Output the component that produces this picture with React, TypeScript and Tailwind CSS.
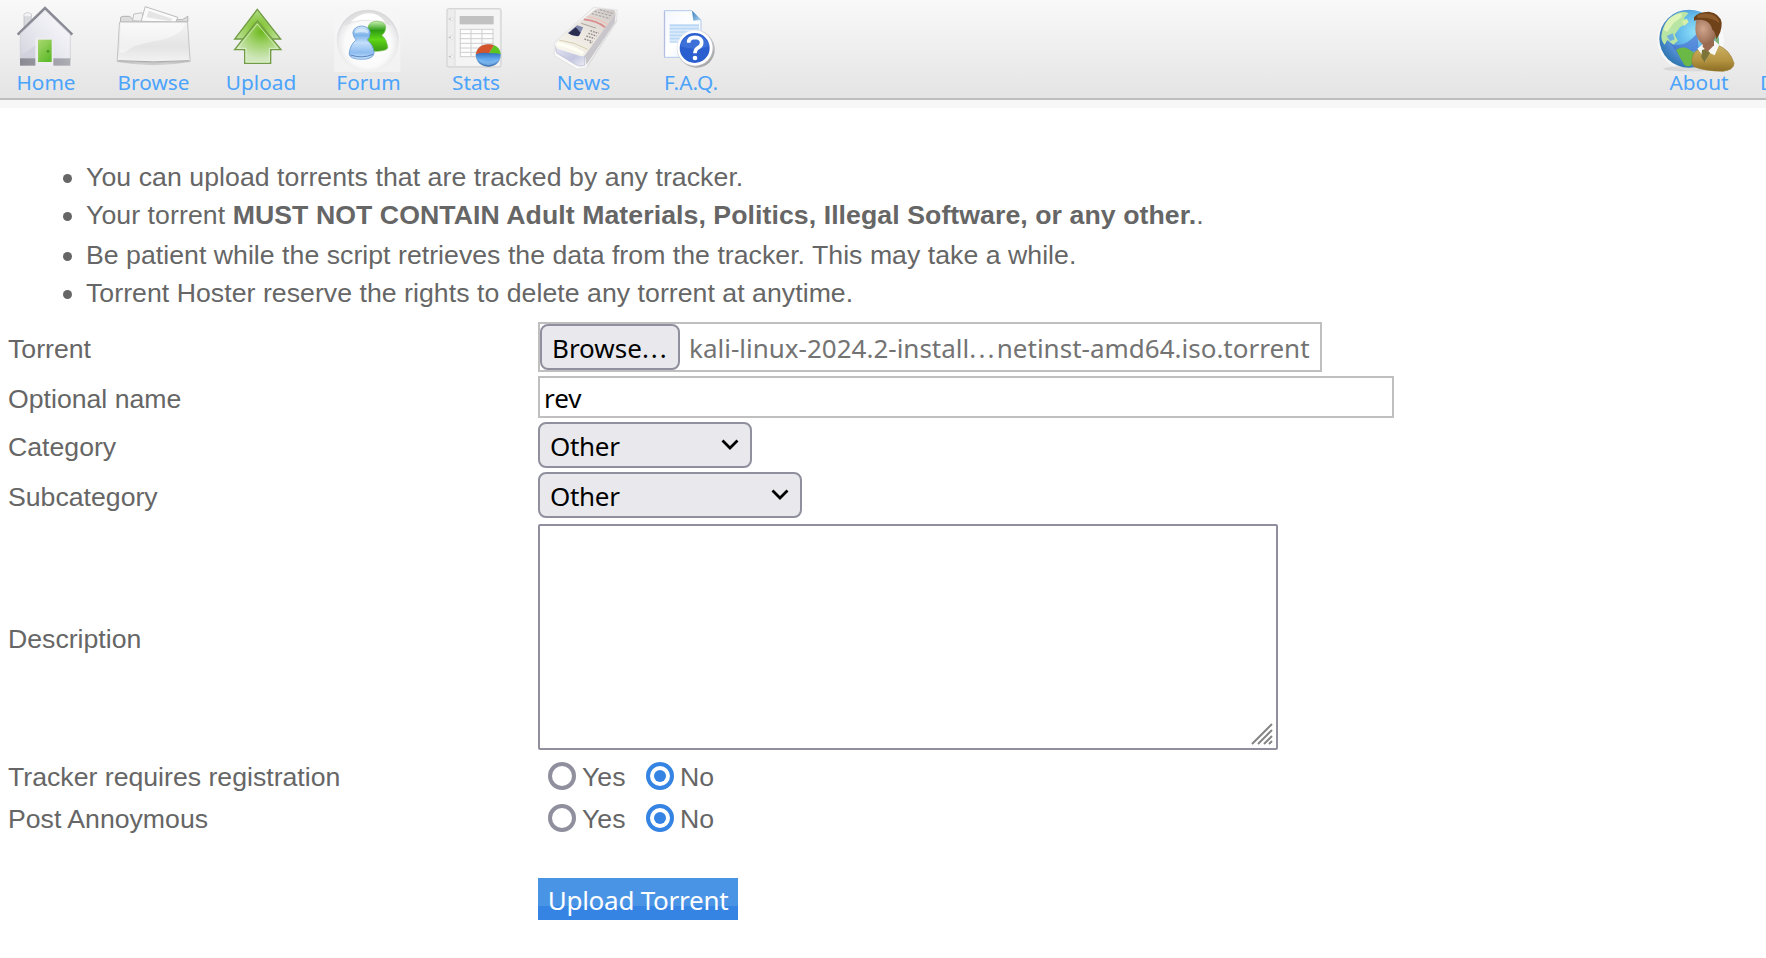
import type { ReactNode } from "react";

const HomeIcon = () => (
  <svg viewBox="0 0 270 216" className="h-[72px] w-[90px]">
    <defs>
      <linearGradient id="homeWall" x1="0" y1="1" x2="1" y2="0">
        <stop offset="0" stopColor="#d3d3de" />
        <stop offset=".4" stopColor="#e6e6ee" />
        <stop offset="1" stopColor="#fdfdfe" />
      </linearGradient>
      <linearGradient id="homeDoor" x1="0" y1="0" x2=".6" y2="1">
        <stop offset="0" stopColor="#abd870" />
        <stop offset="1" stopColor="#62bb2c" />
      </linearGradient>
      <linearGradient id="homeBase" x1="0" y1="0" x2="1" y2="0">
        <stop offset="0" stopColor="#8a8a93" />
        <stop offset="1" stopColor="#adadb4" />
      </linearGradient>
    </defs>
    <path d="M72 82V42q11-9 22 0V70Z" fill="#d9d9de" stroke="#b9b9c2" strokeWidth="2" />
    <path d="M73 43q10-8 20 0v6h-20Z" fill="#f2f2f4" />
    <path d="M61 98L135 26L211 98V180H61Z" fill="url(#homeWall)" stroke="#c8c8d2" strokeWidth="2" />
    <path d="M63 168L112 132V176H63Z" fill="#cfcfdb" opacity=".7" />
    <rect x="60" y="175" width="151" height="22" fill="url(#homeBase)" />
    <path d="M106 198V112h54v86Z" fill="#ececf1" />
    <rect x="114" y="119" width="41" height="67" fill="url(#homeDoor)" />
    <path d="M116 182V152l36-28" stroke="#8fd05c" strokeWidth="4" opacity=".6" fill="none" />
    <circle cx="144" cy="154" r="4" fill="#4c9422" />
    <path d="M53 104L135 24L217 104" fill="none" stroke="#8a8a95" strokeWidth="8" />
    <path d="M60 103L135 31L210 103" fill="none" stroke="#d8d8df" strokeWidth="3" />
  </svg>
);

const BrowseIcon = () => (
  <svg viewBox="322.5 0 270 216" className="h-[72px] w-[90px]">
    <defs>
      <linearGradient id="folderFace" x1="0" y1="0" x2="0" y2="1">
        <stop offset="0" stopColor="#f5f5f5" />
        <stop offset=".6" stopColor="#e4e4e4" />
        <stop offset="1" stopColor="#f3f3f3" />
      </linearGradient>
      <radialGradient id="folderShade" cx=".5" cy=".1" r=".6">
        <stop offset="0" stopColor="#8e8e8e" />
        <stop offset="1" stopColor="#cdcdcd" />
      </radialGradient>
    </defs>
    <path d="M350 186Q460 205 569 186L569 180H350Z" fill="url(#folderShade)" />
    <path d="M360 66V54q1-5 8-5h20l10 10h148l16-10v16Z" fill="#dcdcdc" stroke="#b3b3b3" strokeWidth="3" />
    <path d="M396 62l4-20 24-4 8 26Z" fill="#f2f2f2" stroke="#c2c2c2" strokeWidth="3" />
    <path d="M422 64L434 20L532 52L526 66Z" fill="#fbfbfb" stroke="#bcbcbc" strokeWidth="3" />
    <path d="M438 52l6-20 72 24-6 8Z" fill="#e5e5e5" />
    <path d="M357 66H561L569 184Q460 192 350 184Z" fill="url(#folderFace)" stroke="#c4c4c4" strokeWidth="3" />
    <path d="M361 69H555Q545 110 460 124Q400 134 370 158H356Z" fill="#fff" opacity=".45" />
    <path d="M353 182Q460 189 566 182" fill="none" stroke="#a8a8a8" strokeWidth="3" />
  </svg>
);

const UploadIcon = () => (
  <svg viewBox="15 0 270 216" className="h-[72px] w-[90px]">
    <defs>
      <radialGradient id="arrowBack" cx=".5" cy=".45" r=".6">
        <stop offset="0" stopColor="#74bd1c" />
        <stop offset="1" stopColor="#cbe7b0" />
      </radialGradient>
      <radialGradient id="arrowFront" cx=".58" cy=".25" r=".65">
        <stop offset="0" stopColor="#6cb91d" />
        <stop offset=".45" stopColor="#9fd169" />
        <stop offset="1" stopColor="#cfe7bb" />
      </radialGradient>
    </defs>
    <path d="M142 28L212 117H183V150H103V117H74Z" fill="url(#arrowBack)" stroke="#719b45" strokeWidth="4" />
    <path d="M142 63L213 149H182V190H104V149H74Z" fill="url(#arrowFront)" stroke="#719b45" strokeWidth="4" />
    <path d="M142 72L203 145H178V186H108V145H83Z" fill="none" stroke="#e2f3d2" strokeWidth="3" opacity=".7" />
  </svg>
);

const ForumIcon = () => (
  <svg viewBox="337.5 0 270 216" className="h-[72px] w-[90px]">
    <defs>
      <radialGradient id="orb" cx=".5" cy=".55" r=".52">
        <stop offset="0" stopColor="#fff" />
        <stop offset=".72" stopColor="#fafafa" />
        <stop offset=".93" stopColor="#e9e9eb" />
        <stop offset="1" stopColor="#d9d9db" />
      </radialGradient>
      <linearGradient id="pawnGreen" x1="0" y1="0" x2="0" y2="1">
        <stop offset="0" stopColor="#c6f0b0" />
        <stop offset=".3" stopColor="#2f9d14" />
        <stop offset=".6" stopColor="#5fd615" />
        <stop offset="1" stopColor="#3a9a14" />
      </linearGradient>
      <linearGradient id="pawnBlue" x1="0" y1="0" x2="0" y2="1">
        <stop offset="0" stopColor="#d5e9fc" />
        <stop offset=".28" stopColor="#7db3ea" />
        <stop offset=".5" stopColor="#c4dffa" />
        <stop offset=".8" stopColor="#8dbcf0" />
        <stop offset="1" stopColor="#c8e4fb" />
      </linearGradient>
    </defs>
    <rect x="371" y="26" width="199" height="190" fill="#f6f6f6" opacity=".6" />
    <circle cx="472" cy="122" r="93" fill="url(#orb)" />
    <path d="M402 78Q418 34 472 34Q526 34 542 78Q506 58 472 62Q430 62 402 78Z" fill="#dededf" opacity=".75" />
    <path d="M420 66Q445 40 476 40Q506 40 524 66Q474 52 420 66Z" fill="#fff" />
    <path d="M472 82Q476 64 500 64Q525 65 526 82Q525 98 514 106Q529 118 532 142Q532 152 500 154Q475 154 472 146V110Z" fill="url(#pawnGreen)" stroke="#7cc158" strokeWidth="2" />
    <path d="M427 98Q430 80 453 78Q477 80 479 98Q478 114 470 120Q487 132 491 158Q489 178 453 178Q417 177 416 162Q418 134 437 120Q428 111 427 98Z" fill="url(#pawnBlue)" stroke="#6a9bd4" strokeWidth="2.5" />
    <path d="M434 92q18-11 38 0v8q-18-6-38 0Z" fill="#eef6fe" opacity=".6" />
    <path d="M420 165q34 12 68-2" fill="none" stroke="#5f86be" strokeWidth="3" />
  </svg>
);

const StatsIcon = () => (
  <svg viewBox="0 0 270 216" className="h-[72px] w-[90px]">
    <defs>
      <linearGradient id="statsBlue" x1="0" y1="0" x2="0" y2="1">
        <stop offset="0" stopColor="#2f6fc0" />
        <stop offset=".5" stopColor="#67adf0" />
        <stop offset="1" stopColor="#3a6fae" />
      </linearGradient>
    </defs>
    <rect x="51" y="26" width="162" height="175" rx="6" fill="#ededed" stroke="#d6d6d6" strokeWidth="4" />
    <path d="M75 30V198" stroke="#dadada" strokeWidth="3" />
    <rect x="77" y="30" width="132" height="167" fill="#f4f4f4" />
    {[57, 112, 170].map((y) => (
      <g key={y}>
        <circle cx="65" cy={y} r="5" fill="#fff" stroke="#d2d2d2" strokeWidth="2" />
        <path d={`M56 ${y}h8`} stroke="#bcbcbc" strokeWidth="3" />
      </g>
    ))}
    <rect x="89" y="48" width="102" height="25" fill="#c1c1c1" />
    <rect x="89" y="87" width="102" height="82" fill="#fdfdfd" />
    <path d="M89 88H191M89 101H191M89 116H191M89 130H191M89 144H191M89 157H191M89 170H150M91 87V170M123 87V170M156 87V150M189 87V140" stroke="#cecece" strokeWidth="3" fill="none" />
    <ellipse cx="175" cy="166" rx="38" ry="35" fill="#c9c9c9" />
    <path d="M138 163A37 32 0 0 1 192 136L176 163Z" fill="#d4552c" />
    <path d="M192 136A37 32 0 0 1 212 163H176Z" fill="#5cc420" />
    <path d="M137 163Q150 158 160 158L184 160Q200 158 212 163Q211 197 175 200Q139 198 137 163Z" fill="url(#statsBlue)" />
    <path d="M145 178q30 10 60 0q-8 16-30 18q-22-2-30-18Z" fill="#8cc5f7" opacity=".6" />
  </svg>
);

const NewsIcon = () => (
  <svg viewBox="322.5 0 270 216" className="h-[72px] w-[90px]">
    <defs>
      <linearGradient id="newsEnd" x1="0" y1="0" x2="1" y2="1">
        <stop offset="0" stopColor="#e4e5f3" />
        <stop offset=".6" stopColor="#c3c6df" />
        <stop offset="1" stopColor="#ededf5" />
      </linearGradient>
      <linearGradient id="newsTop" x1="0" y1="1" x2="1" y2="0">
        <stop offset="0" stopColor="#fcfbf2" />
        <stop offset=".5" stopColor="#ebe6df" />
        <stop offset="1" stopColor="#cdc8c6" />
      </linearGradient>
    </defs>
    <path d="M372 128L490 22L560 30L557 66L468 204L440 208L372 168Z" fill="#f9f9f9" stroke="#e6e6e6" strokeWidth="4" />
    <path d="M376 138L462 164L463 196Q448 202 434 193L380 160Q374 152 376 138Z" fill="url(#newsEnd)" stroke="#b4b6ca" strokeWidth="2" />
    <path d="M376 136Q377 125 390 112L492 30Q500 24 512 26L548 30Q558 33 554 46L466 164Q458 172 446 167L386 148Q375 145 376 136Z" fill="url(#newsTop)" />
    <path d="M555 42L553 68L468 194L463 166Z" fill="#c9c6cb" />
    <path d="M560 60L470 200" stroke="#dedede" strokeWidth="4" />
    <path d="M380 132Q420 138 458 160" stroke="#fffef4" strokeWidth="10" fill="none" />
    <path d="M386 120Q432 126 472 148" stroke="#d7cfae" strokeWidth="3" fill="none" />
    <path d="M412 99L440 76L458 82L446 108Q428 112 412 99Z" fill="#8088ae" />
    <path d="M414 100l22-18 14 16-6 10Q428 110 414 100Z" fill="#2a2d50" />
    <path d="M460 58Q500 62 524 82" stroke="#db8b8b" strokeWidth="5" fill="none" />
    <path d="M469 50Q504 54 532 74" stroke="#eec3bd" strokeWidth="4" fill="none" />
    <path d="M492 34l52 14M484 41l54 15M508 29l40 12" stroke="#a49d9e" strokeWidth="3" strokeDasharray="7 4" fill="none" />
    <path d="M480 92l24 8M474 100l24 8M468 108l24 8M462 117l24 8M478 127l8 3" stroke="#8e8687" strokeWidth="4" strokeDasharray="5 3" fill="none" />
    <path d="M452 70l44 14" stroke="#aaa2a0" strokeWidth="3" />
  </svg>
);

const FaqIcon = () => (
  <svg viewBox="645 0 270 216" className="h-[72px] w-[90px]">
    <defs>
      <linearGradient id="faqPage" x1="0" y1="0" x2="1" y2="1">
        <stop offset="0" stopColor="#f3f7fe" />
        <stop offset=".5" stopColor="#fff" />
        <stop offset="1" stopColor="#dbe9fa" />
      </linearGradient>
      <linearGradient id="faqFold" x1="0" y1="0" x2="1" y2="1">
        <stop offset="0" stopColor="#2f78b8" />
        <stop offset="1" stopColor="#b8dcf3" />
      </linearGradient>
      <linearGradient id="faqRing" x1="0" y1="0" x2="1" y2="1">
        <stop offset="0" stopColor="#f3f5fa" />
        <stop offset="1" stopColor="#a5a5a8" />
      </linearGradient>
    </defs>
    <path d="M703 32H786L813 60V172H703Z" fill="url(#faqPage)" stroke="#b4cbea" strokeWidth="3" />
    <path d="M704 172V34" stroke="#b3badf" strokeWidth="3" />
    <path d="M786 32L814 60L790 62Z" fill="url(#faqFold)" />
    <rect x="719" y="72" width="88" height="52" fill="#dcecfb" />
    <path d="M719 76H807M719 86H807M719 96H790M719 106H770M719 116H760M719 126H752" stroke="#bad8f5" strokeWidth="5" />
    <circle cx="800" cy="149" r="54" fill="#8c8c8f" opacity=".75" />
    <circle cx="796" cy="145" r="56" fill="url(#faqRing)" />
    <circle cx="795" cy="144" r="53" fill="#fff" />
    <circle cx="794" cy="144" r="45" fill="#2b5fd0" />
    <path d="M751 138a44 42 0 0 1 86 0q-40 18-86 0Z" fill="#4a7be0" opacity=".6" />
    <path d="M776 128Q776 112 795 112Q815 113 815 128Q815 138 803 144Q795 149 795 160" fill="none" stroke="#fff" strokeWidth="11" />
    <circle cx="795" cy="174" r="7" fill="#fff" />
  </svg>
);

const AboutIcon = () => (
  <svg viewBox="99 0 270 216" className="h-[72px] w-[90px]">
    <defs>
      <radialGradient id="globe" cx=".6" cy=".38" r=".65">
        <stop offset="0" stopColor="#8fe0fa" />
        <stop offset=".45" stopColor="#62b9ea" />
        <stop offset=".8" stopColor="#4a86cc" />
        <stop offset="1" stopColor="#2f78b0" />
      </radialGradient>
      <radialGradient id="face" cx=".35" cy=".4" r=".7">
        <stop offset="0" stopColor="#cfa58c" />
        <stop offset="1" stopColor="#8d5f45" />
      </radialGradient>
      <linearGradient id="jacket" x1="0" y1="0" x2="0" y2="1">
        <stop offset="0" stopColor="#cdb266" />
        <stop offset=".6" stopColor="#b3933f" />
        <stop offset="1" stopColor="#8b6d24" />
      </linearGradient>
    </defs>
    <ellipse cx="212" cy="120" rx="100" ry="92" fill="#fbfbfb" opacity=".7" />
    <ellipse cx="210" cy="206" rx="80" ry="8" fill="#c9c9c9" opacity=".6" />
    <ellipse cx="207" cy="116" rx="89" ry="87" fill="url(#globe)" />
    <path d="M150 130Q190 150 232 100L236 150Q200 160 176 166Z" fill="#4a6fd0" opacity=".65" />
    <path d="M124 108Q130 58 172 40Q192 32 206 40L192 54L200 70L180 82L164 104L174 122L160 134L142 120L134 134Q124 124 124 108Z" fill="#b9e5a4" />
    <path d="M146 58Q164 42 186 40L184 52L160 70L142 96L130 90Q134 72 146 58Z" fill="#def3b8" />
    <path d="M140 108l18-8 6 18-14 6Z" fill="#6fb2dd" />
    <path d="M186 64l14-8 6 10-14 12Z" fill="#d8efa8" />
    <path d="M168 150Q186 138 204 146L222 158L214 196Q204 202 194 196L182 176Z" fill="#6ab845" />
    <path d="M286 92Q302 118 296 150L282 140Z" fill="#7fb57c" />
    <path d="M216 176Q220 152 240 148L290 134Q330 148 342 190Q342 210 308 214Q250 212 222 200Q214 192 216 176Z" fill="url(#jacket)" stroke="#9b7d35" strokeWidth="2" />
    <path d="M232 146L246 134L284 122L298 134L284 166L268 158L256 186L246 164Z" fill="#f6f6f4" />
    <path d="M246 150L258 146L270 158L254 188L244 172Z" fill="#7c7438" />
    <path d="M250 122h32v14l-20 20-14-16Z" fill="#9a6b50" />
    <path d="M228 62Q240 50 272 58L292 84Q290 118 270 132Q256 140 246 132Q226 114 226 88Z" fill="url(#face)" />
    <path d="M222 52Q234 36 266 35Q300 40 305 68Q306 96 288 118Q288 96 276 88Q274 70 256 62Q238 56 222 62Z" fill="#6f4219" />
    <path d="M232 46Q252 36 278 44Q296 52 298 70Q276 50 232 54Z" fill="#8f5c2b" />
  </svg>
);

const NavItem = ({ label, children }: { label: string; children?: ReactNode }) => (
  <a className="flex w-[90px] shrink-0 flex-col items-center">
    <span className="block h-[72px] w-[90px]">{children}</span>
    <span className="block pl-[2px] text-[20.8px] leading-[21px] text-[#4ba3fb]">{label}</span>
  </a>
);

const Row = ({ label, className, children }: { label: string; className: string; children: ReactNode }) => (
  <div className={`flex items-center pl-2 ${className}`}>
    <label className="w-[530px] shrink-0 pt-[3px] leading-[30px]">{label}</label>
    {children}
  </div>
);

const Select = ({ className }: { className: string }) => (
  <div
    className={`flex h-[46px] items-center justify-between rounded-lg border-2 border-[#8f8f9d] bg-[#e9e9ed] pl-[10px] pr-[11px] font-['Noto_Sans',sans-serif] text-[26px] text-black ${className}`}
  >
    <span className="pt-[2px] leading-[40px] tracking-[-0.3px]">Other</span>
    <svg viewBox="0 0 18 12" className="h-3 w-[18px]">
      <path d="M1.5 1.5L9 9L16.5 1.5" fill="none" stroke="#000" strokeWidth="2.8" />
    </svg>
  </div>
);

const Radio = ({ label, checked }: { label: string; checked?: boolean }) => (
  <span className="flex items-center">
    <span
      className={`flex size-7 items-center justify-center rounded-full border-4 bg-white ${checked ? "border-[#3584e4]" : "border-[#8f8f9d]"}`}
    >
      {checked && <span className="size-3 rounded-full bg-[#3584e4]" />}
    </span>
    <span className="pl-[6px] pt-px leading-[30px]">{label}</span>
  </span>
);

const YesNo = () => (
  <div className="flex pl-[10px]">
    <span className="block w-[98px]">
      <Radio label="Yes" />
    </span>
    <Radio label="No" checked />
  </div>
);

const rule = "relative pl-[86px] leading-[38px]";

const Dot = () => <span className="absolute left-[63px] top-[16px] size-[9px] rounded-full bg-[#666]" />;

export default function App() {
  return (
    <div className="h-[958px] w-full overflow-hidden bg-white font-['Liberation_Sans',Arial,sans-serif] text-[26.67px] text-[#666]">
      <header className="border-b-8 border-[#f7f7f7]">
        <nav className="flex h-[100px] gap-[17.5px] overflow-hidden border-b-2 border-[#bdbdbd] bg-linear-to-b from-[#f9f9f9] to-[#e4e4e4] font-['Noto_Sans',sans-serif]">
          <NavItem label="Home"><HomeIcon /></NavItem>
          <NavItem label="Browse"><BrowseIcon /></NavItem>
          <NavItem label="Upload"><UploadIcon /></NavItem>
          <NavItem label="Forum"><ForumIcon /></NavItem>
          <NavItem label="Stats"><StatsIcon /></NavItem>
          <NavItem label="News"><NewsIcon /></NavItem>
          <NavItem label="F.A.Q."><FaqIcon /></NavItem>
          <div className="ml-auto flex w-[113px] shrink-0 overflow-hidden">
            <NavItem label="About"><AboutIcon /></NavItem>
            <span className="shrink-0 pl-[17px] pt-[72px] text-[20.8px] leading-[21px] text-[#4ba3fb]">D</span>
          </div>
        </nav>
      </header>

      <ul className="pt-[50px]">
        <li className={`tracking-[0.06px] ${rule}`}>
          <Dot />You can upload torrents that are tracked by any tracker.
        </li>
        <li className={`tracking-[0.07px] ${rule}`}>
          <Dot />Your torrent <b>MUST NOT CONTAIN Adult Materials, Politics, Illegal Software, or any other.</b>.
        </li>
        <li className={`mt-[2px] tracking-[0.03px] ${rule}`}>
          <Dot />Be patient while the script retrieves the data from the tracker. This may take a while.
        </li>
        <li className={`tracking-[0.04px] ${rule}`}>
          <Dot />Torrent Hoster reserve the rights to delete any torrent at anytime.
        </li>
      </ul>

      <form className="pt-[10px]">
        <Row label="Torrent" className="h-[50px]">
          <div className="flex h-[50px] w-[784px] border-2 border-[#bfbfbf] font-['Noto_Sans',sans-serif] text-[26px]">
            <span className="h-[46px] w-[140px] shrink-0 rounded-lg border-2 border-[#8f8f9d] bg-[#e9e9ed] pl-[10px] leading-[44px] text-black">
              Browse<span className="tracking-[1.9px]">...</span>
            </span>
            <span className="whitespace-nowrap pl-[9px] leading-[48px] text-[#737373]">
              kali-linux-2024.2-install<span className="tracking-[2.2px]">...</span>netinst-amd64.iso.torrent
            </span>
          </div>
        </Row>
        <Row label="Optional name" className="mt-1 h-[42px]">
          <div className="h-[42px] w-[856px] border-2 border-[#bfbfbf] pl-1 font-['Noto_Sans',sans-serif] text-[26px] leading-[40px] text-black">
            rev
          </div>
        </Row>
        <Row label="Category" className="mt-1 h-[46px]">
          <Select className="w-[214px]" />
        </Row>
        <Row label="Subcategory" className="mt-1 h-[46px]">
          <Select className="w-[264px]" />
        </Row>
        <Row label="Description" className="mt-[6px] h-[226px]">
          <div className="flex h-[226px] w-[740px] items-end justify-end rounded-[2px] border-2 border-[#8f8f9d] bg-white pb-[3px] pr-[3px]">
            <svg viewBox="0 0 22 22" className="size-[22px]">
              <path d="M1 21L21 1M7 21L21 7M13 21L21 13M18 21L21 18" fill="none" stroke="#858585" strokeWidth="2" />
            </svg>
          </div>
        </Row>
        <Row label="Tracker requires registration" className="mt-[5px] h-[42px] [&>label]:pt-px">
          <YesNo />
        </Row>
        <Row label="Post Annoymous" className="h-[42px] [&>label]:pt-px">
          <YesNo />
        </Row>
        <div className="pl-[538px] pt-[39px]">
          <button
            type="button"
            className="block h-[42px] w-[200px] bg-linear-to-b from-[#4a94e6] from-[67%] to-[#3584e4] to-[67%] text-center font-['Noto_Sans',sans-serif] text-[26px] leading-[44px] tracking-[-0.25px] text-white"
          >
            Upload Torrent
          </button>
        </div>
      </form>
    </div>
  );
}
